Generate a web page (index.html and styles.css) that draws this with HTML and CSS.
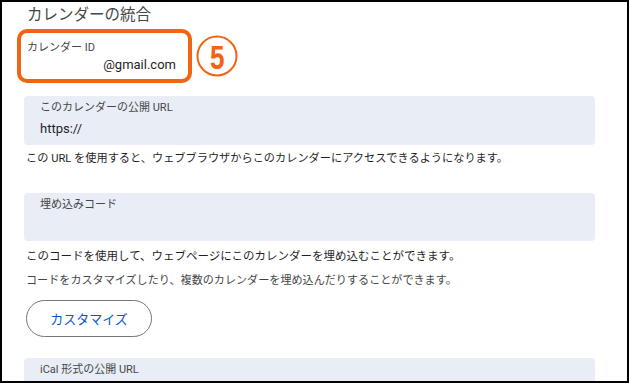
FILE: index.html
```html
<!DOCTYPE html>
<html lang="ja">
<head>
  <meta charset="UTF-8" />
  <meta name="viewport" content="width=device-width, initial-scale=1.0" />
  <title>カレンダーの統合</title>
  <link rel="stylesheet" href="styles.css">
</head>
<body>
  <div class="frame">
    <h1 class="title">カレンダーの統合</h1>

    <div class="id-row">
      <div class="id-box">
        <div class="field-label id-label">カレンダー ID</div>
        <div class="id-value">@gmail.com</div>
      </div>
      <svg class="step" width="42" height="42" viewBox="0 0 42 42">
        <circle cx="21" cy="21" r="19.5" fill="none" stroke="#f06414" stroke-width="2" />
        <text x="14" y="33.5" textLength="14.5" lengthAdjust="spacingAndGlyphs" class="step-num">5</text>
      </svg>
    </div>

    <div class="field">
      <div class="field-label">このカレンダーの公開 URL</div>
      <div class="field-value">https://</div>
    </div>
    <p class="help help-url">この URL を使用すると、ウェブブラウザからこのカレンダーにアクセスできるようになります。</p>

    <div class="field field-code">
      <div class="field-label">埋め込みコード</div>
    </div>
    <p class="help help-code">このコードを使用して、ウェブページにこのカレンダーを埋め込むことができます。</p>
    <p class="help help-small">コードをカスタマイズしたり、複数のカレンダーを埋め込んだりすることができます。</p>

    <button class="btn-outline">カスタマイズ</button>

    <div class="field field-ical">
      <div class="field-label">iCal 形式の公開 URL</div>
    </div>
  </div>
</body>
</html>
```

FILE: styles.css
```css
* { margin: 0; padding: 0; box-sizing: border-box; }
body {
  font-family: Roboto, "Noto Sans CJK JP", sans-serif;
  color: #1f1f1f;
  background: #fff;
}
.frame {
  width: 629px;
  height: 383px;
  border: 2px solid #000;
  overflow: hidden;
  padding: 3px 0 0 24px;
}
.title {
  font-size: 15.5px;
  font-weight: 400;
  line-height: 20px;
  color: #444746;
  margin-left: 1px;
}

/* calendar id, marked with the orange frame */
.id-row {
  display: flex;
  align-items: center;
  gap: 4px;
  margin: 4px 0 0 -9px;
}
.id-box {
  width: 175px;
  height: 54px;
  border: 4px solid #f06414;
  border-radius: 10px;
  padding: 8px 12px 0 6px;
}
.id-label { font-size: 11px; }
.id-value {
  font-size: 13px;
  line-height: 16px;
  text-align: right;
  margin-top: 2px;
}
.step-num {
  font-family: "Liberation Sans", Arial, sans-serif;
  font-weight: 700;
  font-size: 33px;
  fill: #f06414;
}

/* grey fields */
.field {
  width: 571px;
  height: 49px;
  margin: 13px 0 0 -2px;
  background: #e9eef6;
  border-radius: 4px;
  padding: 5px 16px 0;
}
.field-label {
  font-size: 11px;
  line-height: 14px;
  color: #444746;
}
.field-value {
  font-size: 13px;
  line-height: 16px;
  margin-top: 6px;
}
.field-code { height: 48px; margin-top: 26px; padding-top: 5px; }
.field-ical { height: 30px; margin-top: 21px; padding-top: 5px; }

.help {
  font-size: 11.2px;
  line-height: 16px;
}
.help-url { margin-top: 6px; }
.help-code { margin-top: 7px; font-size: 11.5px; }
.help-small { margin-top: 9px; font-size: 11.1px; color: #444746; }

.btn-outline {
  display: block;
  width: 126px;
  height: 37px;
  margin-top: 11px;
  border: 1px solid #747775;
  border-radius: 19px;
  background: #fff;
  font-family: Roboto, "Noto Sans CJK JP", sans-serif;
  font-size: 13px;
  color: #0b57d0;
}
```
